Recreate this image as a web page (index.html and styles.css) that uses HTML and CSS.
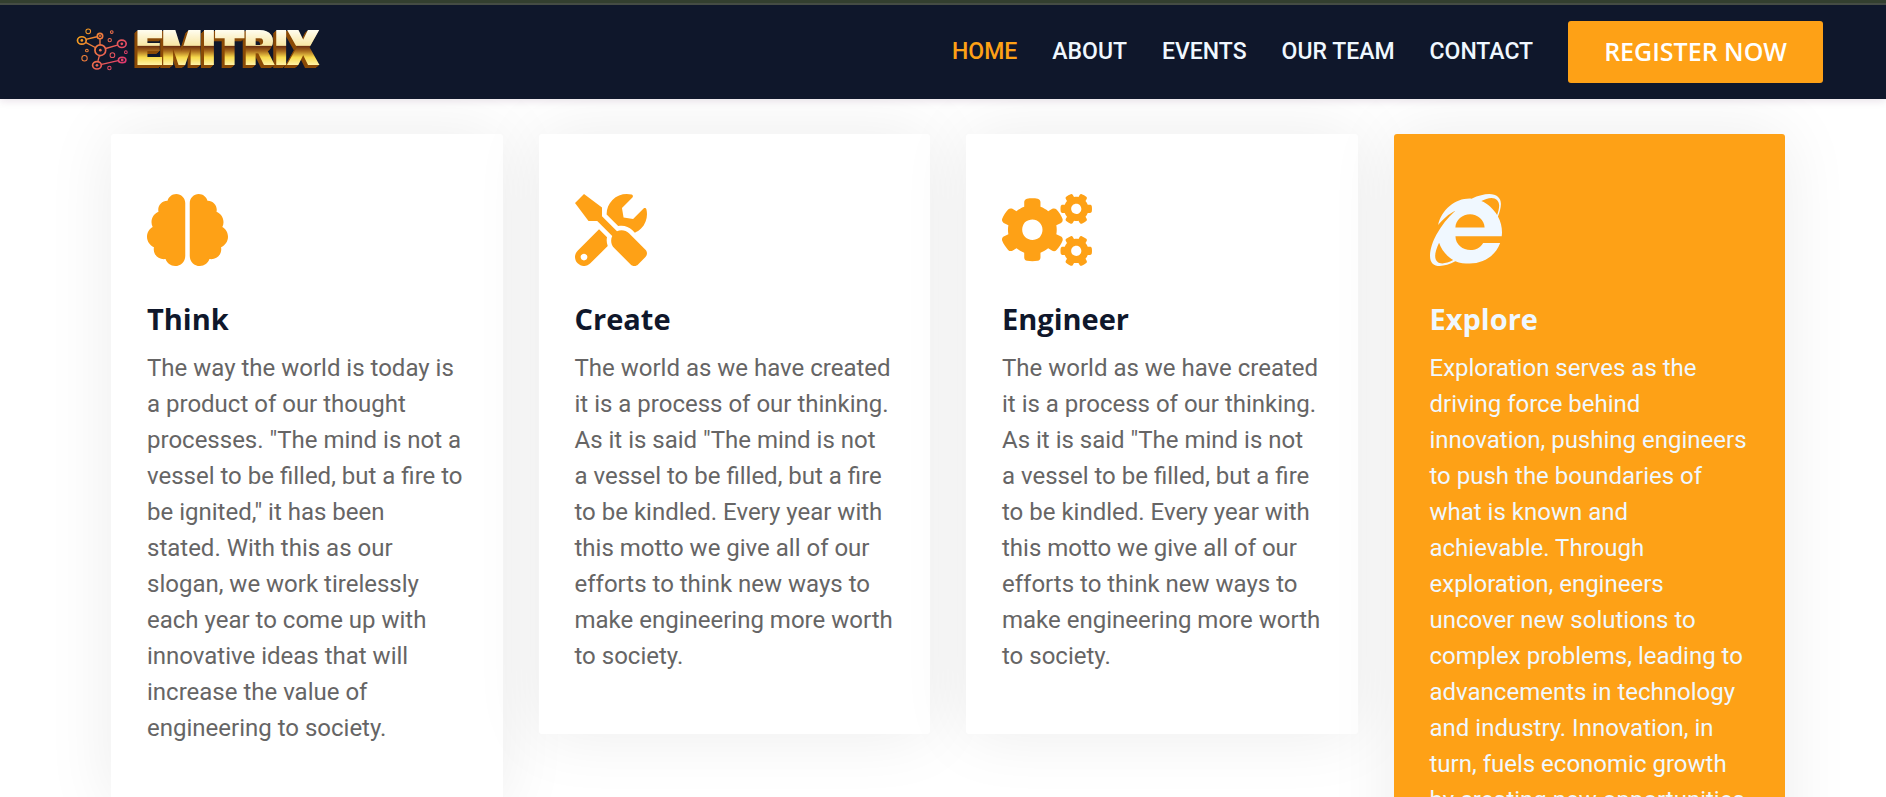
FILE: index.html
```html
<!DOCTYPE html>
<html lang="en">
<head>
<meta charset="utf-8">
<meta name="viewport" content="width=device-width, initial-scale=1">
<title>Emitrix</title>
<link rel="stylesheet" href="styles.css">
</head>
<body>
<header class="navbar">
  <a class="brand" href="#" aria-label="Emitrix">
    <svg class="brand-mark" viewBox="50 82 154 128" aria-hidden="true">
      <defs>
        <linearGradient id="mark" gradientUnits="userSpaceOnUse" x1="60" y1="100" x2="200" y2="190">
          <stop offset="0" stop-color="#f6a11c"/>
          <stop offset=".5" stop-color="#ee6a4c"/>
          <stop offset="1" stop-color="#df3273"/>
        </linearGradient>
      </defs>
      <g fill="none" stroke="url(#mark)" stroke-width="3">
        <path stroke-width="4" d="M79 116L112 108M78 125L107 140M121 115V132M138 143L173 133M119 165L115 180M126 190L175 179"/>
        <g stroke-width="5">
          <ellipse cx="67" cy="119" rx="13" ry="11"/>
          <circle cx="121" cy="106" r="8"/>
          <circle cx="122" cy="148" r="16"/>
          <ellipse cx="186" cy="129" rx="13" ry="11"/>
          <ellipse cx="187" cy="177" rx="11" ry="8"/>
          <ellipse cx="112" cy="193" rx="13" ry="11"/>
        </g>
        <circle cx="86" cy="92" r="7"/>
        <circle cx="156" cy="94" r="4"/>
        <circle cx="150" cy="118" r="5"/>
        <circle cx="82" cy="149" r="4"/>
        <circle cx="75" cy="172" r="8"/>
        <circle cx="158" cy="163" r="7"/>
        <circle cx="198" cy="154" r="4"/>
        <circle cx="149" cy="201" r="5"/>
      </g>
      <g fill="url(#mark)">
        <circle cx="67" cy="119" r="4"/>
        <circle cx="121" cy="106" r="3"/>
        <circle cx="122" cy="148" r="4"/>
        <circle cx="186" cy="129" r="4"/>
        <circle cx="187" cy="177" r="4"/>
        <circle cx="112" cy="193" r="4"/>
      </g>
    </svg>
    <svg class="brand-name" viewBox="0 0 188 42" aria-hidden="true">
      <defs>
        <linearGradient id="gold" gradientUnits="userSpaceOnUse" x1="0" y1="2" x2="0" y2="37">
          <stop offset="0" stop-color="#fffdf0"/>
          <stop offset=".44" stop-color="#f8e7a4"/>
          <stop offset=".46" stop-color="#6b2f10"/>
          <stop offset=".6" stop-color="#a86a1c"/>
          <stop offset=".78" stop-color="#f7d94c"/>
          <stop offset="1" stop-color="#fff3a6"/>
        </linearGradient>
      </defs>
      <text class="brand-text" x="3" y="36">EMITRIX</text>
    </svg>
  </a>
  <nav class="menu" aria-label="Main">
    <a class="menu-link active" href="#">HOME</a>
    <a class="menu-link" href="#">ABOUT</a>
    <a class="menu-link" href="#">EVENTS</a>
    <a class="menu-link" href="#">OUR TEAM</a>
    <a class="menu-link" href="#">CONTACT</a>
    <a class="register" href="#">REGISTER NOW</a>
  </nav>
</header>
<main class="services">
  <article class="card">
    <svg class="card-icon" viewBox="0 0 576 512" aria-hidden="true"><path d="M208 0c-29.9 0-54.7 20.5-61.8 48.2-.8 0-1.4-.2-2.2-.2-35.3 0-64 28.7-64 64 0 4.8.6 9.5 1.7 14C52.5 138 32 166.6 32 200c0 12.6 3.2 24.3 8.3 34.9C16.3 248.7 0 274.3 0 304c0 33.3 20.4 61.9 49.4 73.9-.9 4.6-1.4 9.3-1.4 14.1 0 39.8 32.2 72 72 72 4.1 0 8.1-.5 12-1.2 9.6 28.5 36.2 49.2 68 49.2 39.8 0 72-32.2 72-72V64c0-35.3-28.7-64-64-64zm368 304c0-29.7-16.3-55.3-40.3-69.1 5.2-10.6 8.3-22.3 8.3-34.9 0-33.4-20.5-62-49.7-74 1-4.5 1.7-9.2 1.7-14 0-35.3-28.7-64-64-64-.8 0-1.5.2-2.2.2C422.7 20.5 397.9 0 368 0c-35.3 0-64 28.6-64 64v376c0 39.8 32.2 72 72 72 31.8 0 58.4-20.7 68-49.2 3.9.7 7.9 1.2 12 1.2 39.8 0 72-32.2 72-72 0-4.8-.5-9.5-1.4-14.1 29-12 49.4-40.6 49.4-73.9z"/></svg>
    <h2 class="card-title">Think</h2>
    <p class="card-text">The way the world is today is a product of our thought processes. "The mind is not a vessel to be filled, but a fire to be ignited," it has been stated.&nbsp;With this as our slogan, we work tirelessly each year to come up with innovative ideas that will increase the value of engineering to society.</p>
  </article>
  <article class="card">
    <svg class="card-icon" viewBox="0 0 512 512" aria-hidden="true"><path d="M501.1 395.7L384 278.6c-23.1-23.1-57.6-27.6-85.4-13.9L192 158.1V96L64 0 0 64l96 128h62.1l106.6 106.6c-13.6 27.8-9.2 62.3 13.9 85.4l117.1 117.1c14.6 14.6 38.2 14.6 52.7 0l52.7-52.7c14.5-14.6 14.5-38.2 0-52.7zM331.7 225c28.3 0 54.9 11 74.9 31l19.4 19.4c15.8-6.9 30.8-16.5 43.8-29.5 37.1-37.1 49.7-89.3 37.9-136.7-2.2-9-13.5-12.1-20.1-5.5l-74.4 74.4-67.9-11.3L334 98.9l74.4-74.4c6.6-6.6 3.4-17.9-5.7-20.2-47.4-11.7-99.6.9-136.6 37.9-28.5 28.5-41.9 66.1-41.2 103.6l82.1 82.1c8.1-1.9 16.5-2.9 24.7-2.9zm-103.9 82l-56.7-56.7L18.7 402.8c-25 25-25 65.5 0 90.5s65.5 25 90.5 0l123.6-123.6c-7.6-19.9-9.9-41.6-5-62.7zM64 472c-13.2 0-24-10.8-24-24 0-13.3 10.7-24 24-24s24 10.7 24 24c0 13.2-10.7 24-24 24z"/></svg>
    <h2 class="card-title">Create</h2>
    <p class="card-text">The world as we have created it is a process of our thinking. As it is said "The mind is not a vessel to be filled, but a fire to be kindled. Every year with this motto we give all of our efforts to think new ways to make engineering more worth to society.</p>
  </article>
  <article class="card">
    <svg class="card-icon" viewBox="0 0 640 512" aria-hidden="true"><path d="M512.1 191l-8.2 14.3c-3 5.3-9.4 7.5-15.1 5.4-11.8-4.4-22.6-10.7-32.1-18.6-4.6-3.8-5.8-10.5-2.8-15.7l8.2-14.3c-6.9-8-12.3-17.3-15.9-27.4h-16.5c-6 0-11.2-4.3-12.2-10.3-2-12-2.1-24.6 0-37.1 1-6 6.2-10.4 12.2-10.4h16.5c3.6-10.1 9-19.4 15.9-27.4l-8.2-14.3c-3-5.2-1.9-11.9 2.8-15.7 9.5-7.9 20.4-14.2 32.1-18.6 5.7-2.1 12.1.1 15.1 5.4l8.2 14.3c10.5-1.9 21.2-1.9 31.7 0L552 6.3c3-5.3 9.4-7.5 15.1-5.4 11.8 4.4 22.6 10.7 32.1 18.6 4.6 3.8 5.8 10.5 2.8 15.7l-8.2 14.3c6.9 8 12.3 17.3 15.9 27.4h16.5c6 0 11.2 4.3 12.2 10.3 2 12 2.1 24.6 0 37.1-1 6-6.2 10.4-12.2 10.4h-16.5c-3.6 10.1-9 19.4-15.9 27.4l8.2 14.3c3 5.2 1.9 11.9-2.8 15.7-9.5 7.9-20.4 14.2-32.1 18.6-5.7 2.1-12.1-.1-15.1-5.4l-8.2-14.3c-10.4 1.9-21.2 1.9-31.7 0zm-10.5-58.8c38.5 29.6 82.4-14.3 52.8-52.8-38.5-29.7-82.4 14.3-52.8 52.8zM386.3 286.1l33.7 16.8c10.1 5.8 14.5 18.1 10.5 29.1-8.9 24.2-26.4 46.4-42.6 65.8-7.4 8.9-20.2 11.1-30.3 5.3l-29.1-16.8c-16 13.7-34.6 24.6-54.9 31.7v33.6c0 11.6-8.3 21.6-19.7 23.6-24.6 4.2-50.4 4.4-75.9 0-11.5-2-20-11.9-20-23.6V418c-20.3-7.2-38.9-18-54.9-31.7L74 403c-10 5.8-22.9 3.6-30.3-5.3-16.2-19.4-33.3-41.6-42.2-65.7-4-10.9.4-23.2 10.5-29.1l33.3-16.8c-3.9-20.9-3.9-42.4 0-63.4L12 205.8c-10.1-5.8-14.6-18.1-10.5-29 8.9-24.2 26-46.4 42.2-65.8 7.4-8.9 20.2-11.1 30.3-5.3l29.1 16.8c16-13.7 34.6-24.6 54.9-31.7V57.1c0-11.5 8.2-21.5 19.6-23.5 24.6-4.2 50.5-4.4 76-.1 11.5 2 20 11.9 20 23.6v33.6c20.3 7.2 38.9 18 54.9 31.7l29.1-16.8c10-5.8 22.9-3.6 30.3 5.3 16.2 19.4 33.2 41.6 42.1 65.8 4 10.9.1 23.2-10 29.1l-33.7 16.8c3.9 21 3.9 42.5 0 63.5zm-117.6 21.1c59.2-77-28.7-164.9-105.7-105.7-59.2 77 28.7 164.9 105.7 105.7zm243.4 182.7l-8.2 14.3c-3 5.3-9.4 7.5-15.1 5.4-11.8-4.4-22.6-10.7-32.1-18.6-4.6-3.8-5.8-10.5-2.8-15.7l8.2-14.3c-6.9-8-12.3-17.3-15.9-27.4h-16.5c-6 0-11.2-4.3-12.2-10.3-2-12-2.1-24.6 0-37.1 1-6 6.2-10.4 12.2-10.4h16.5c3.6-10.1 9-19.4 15.9-27.4l-8.2-14.3c-3-5.2-1.9-11.9 2.8-15.7 9.5-7.9 20.4-14.2 32.1-18.6 5.7-2.1 12.1.1 15.1 5.4l8.2 14.3c10.5-1.9 21.2-1.9 31.7 0l8.2-14.3c3-5.3 9.4-7.5 15.1-5.4 11.8 4.4 22.6 10.7 32.1 18.6 4.6 3.8 5.8 10.5 2.8 15.7l-8.2 14.3c6.9 8 12.3 17.3 15.9 27.4h16.5c6 0 11.2 4.3 12.2 10.3 2 12 2.1 24.6 0 37.1-1 6-6.2 10.4-12.2 10.4h-16.5c-3.6 10.1-9 19.4-15.9 27.4l8.2 14.3c3 5.2 1.9 11.9-2.8 15.7-9.5 7.9-20.4 14.2-32.1 18.6-5.7 2.1-12.1-.1-15.1-5.4l-8.2-14.3c-10.4 1.9-21.2 1.9-31.7 0zM501.6 431c38.5 29.6 82.4-14.3 52.8-52.8-38.5-29.6-82.4 14.3-52.8 52.8z"/></svg>
    <h2 class="card-title">Engineer</h2>
    <p class="card-text">The world as we have created it is a process of our thinking. As it is said "The mind is not a vessel to be filled, but a fire to be kindled. Every year with this motto we give all of our efforts to think new ways to make engineering more worth to society.</p>
  </article>
  <article class="card card-featured">
    <svg class="card-icon" viewBox="0 0 512 512" aria-hidden="true"><path d="M483.049 159.706c10.855-24.575 21.424-60.438 21.424-87.871 0-72.722-79.641-98.371-209.673-38.577-107.632-7.181-211.221 73.67-237.098 186.457 30.852-34.862 78.271-82.298 121.977-101.158C125.404 166.85 79.128 228.002 43.992 291.725 23.246 329.651 0 390.94 0 436.747c0 98.575 92.854 86.5 180.251 42.006 31.423 15.43 66.559 15.573 101.695 15.573 97.124 0 184.249-54.294 216.814-146.022H377.927c-52.509 88.593-196.819 52.996-196.819-47.436H509.9c6.407-43.581-1.655-95.715-26.851-141.162zM64.559 346.877c17.711 51.15 53.703 95.871 100.266 123.304-88.741 48.94-173.267 29.096-100.266-123.304zm115.977-108.873c2-55.151 50.276-94.871 103.98-94.871 53.418 0 101.981 39.72 103.981 94.871H180.536zm184.536-187.6c21.425-10.287 48.559-22.003 72.558-22.003 31.422 0 54.274 21.717 54.274 53.722 0 20.003-7.427 49.007-14.569 67.867-26.28-42.29-65.99-81.584-112.263-99.586z"/></svg>
    <h2 class="card-title">Explore</h2>
    <p class="card-text">Exploration serves as the driving force behind innovation, pushing engineers to push the boundaries of what is known and achievable. Through exploration, engineers uncover new solutions to complex problems, leading to advancements in technology and industry. Innovation, in turn, fuels economic growth by creating new opportunities</p>
  </article>
</main>
</body>
</html>
```

FILE: styles.css
```css
* {
  box-sizing: border-box;
}

body {
  margin: 0;
  height: 100vh;
  overflow: hidden;
  border-top: 3px solid #333f2f;
  background: #fff;
  color: #666565;
  font-family: Roboto, "Liberation Sans", sans-serif;
  font-size: 24px;
  line-height: 36px;
}

a {
  text-decoration: none;
}

.navbar {
  position: relative;
  z-index: 1;
  display: flex;
  align-items: center;
  justify-content: space-between;
  padding: 16px 63px 16px 76px;
  border-top: 2px solid #454c44;
  background: #0f172b;
  box-shadow: 0 2px 8px rgba(72, 20, 72, .12);
}

.brand {
  display: flex;
  align-items: center;
  gap: 5px;
  padding-bottom: 6px;
}

.brand-mark {
  width: 52px;
  height: 43px;
}

.brand-name {
  width: 188px;
  height: 42px;
  overflow: visible;
}

.brand-text {
  fill: url(#gold);
  stroke: url(#gold);
  stroke-width: 2px;
  font-family: Roboto, sans-serif;
  font-size: 46px;
  font-weight: 900;
  filter: drop-shadow(-1px 1px 0 #8a4a06) drop-shadow(-1px 1px 0 #8a4a06) drop-shadow(-1px 1px 0 #8a4a06);
}

.menu {
  display: flex;
  align-items: center;
  gap: 35px;
}

.menu-link {
  color: #f0f8ff;
  font-size: 23px;
  font-weight: 500;
}

.menu-link.active {
  color: #fea116;
}

.register {
  padding: 12px 36px 14px;
  border-radius: 3px;
  background: #fea116;
  color: #fff;
  font-family: "Open Sans", sans-serif;
  font-size: 25px;
  font-weight: 600;
}

.services {
  display: grid;
  grid-template-columns: repeat(4, 1fr);
  align-items: start;
  gap: 36px;
  padding: 35px 101px 36px 111px;
}

.card {
  padding: 60px 36px;
  border-radius: 3px;
  background: #fff;
  box-shadow: 0 0 68px rgba(0, 0, 0, .08);
}

.card-icon {
  display: block;
  height: 72px;
  margin-bottom: 36px;
  fill: #fea116;
}

.card-title {
  margin: 0 0 14px;
  color: #0f172b;
  font-family: "Open Sans", sans-serif;
  font-size: 29px;
  font-weight: 700;
  line-height: 34px;
}

.card-text {
  margin: 0;
}

.card-featured {
  background: #fea116;
  color: #f0f8ff;
}

.card-featured .card-icon {
  fill: #f0f8ff;
}

.card-featured .card-title {
  color: #f0f8ff;
}
```
